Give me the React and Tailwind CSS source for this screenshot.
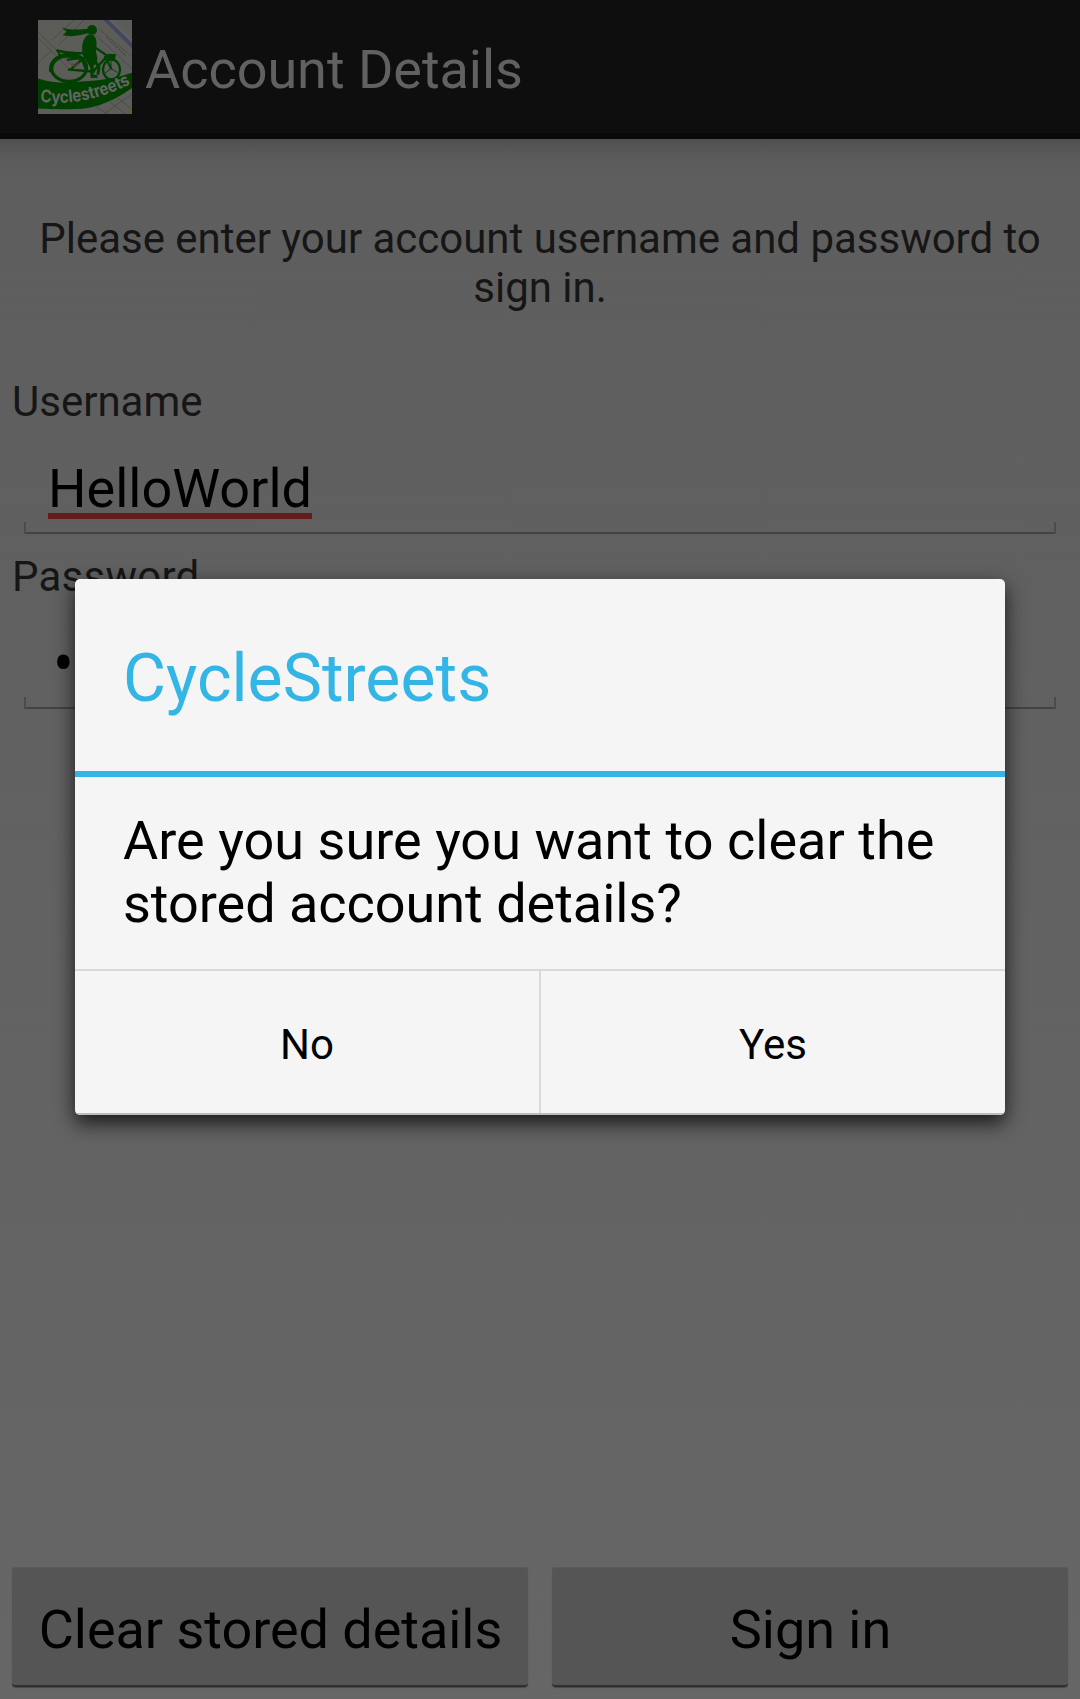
function Logo() {
  return (
    <svg className="block h-[94px] w-[94px] shrink-0" viewBox="0 0 94 95" preserveAspectRatio="none" fill="none">
      <defs>
        <path id="banner" d="M2 82.500 C30 86.500 62 81 98 62" />
        <clipPath id="frame"><rect width="94" height="95" /></clipPath>
      </defs>
      <g clipPath="url(#frame)">
        <rect width="95" height="95" fill="#5c5d58" />
        <g stroke="#4c4d48" strokeWidth="1">
          <path d="M0 12 L36 48 M0 18 L30 48 M14 20 L36 0 M20 26 L46 0 M0 44 L14 30 M54 12 L95 50 M60 8 L95 38 M66 95 L95 74 M58 88 L70 95 M72 83 L88 95 M80 79 L95 91" />
        </g>
        <path d="M68 17 L88 36" stroke="#454642" strokeWidth="1.400" strokeDasharray="2 1.5" />
        <path d="M64 -4 L97 29" stroke="#44475a" strokeWidth="4" />
        <path d="M69 -3 L97 24" stroke="#5f6274" strokeWidth="1.500" />
        <circle cx="93" cy="92" r="2" fill="#7b5a16" />
        <path d="M0 59 C18 65 33 63 48 62 C65 61 81 58 95 53 L95 68 C78 80 60 90 36 90 C24 90.500 12 90 0 89.500 Z" fill="#004000" />
        <g fill="#004000">
          <circle cx="54" cy="10" r="5" />
          <path d="M52 9 C42 9 34 11 24 7.500 L28.500 12 L24.500 15.500 C35 17.500 42 15.500 52 13 Z" />
          <path d="M50 15 C56 13 59 18 58.500 25 L58 33 C60 38 60 42 56 46 C50 42 46 38 44.500 33 C43.500 25 45 19 50 15 Z" />
          <path d="M70 34 L78 34.500 L77 40 L72 41 L68 38 Z" />
        </g>
        <g stroke="#004000" strokeLinecap="round" strokeLinejoin="round">
          <ellipse cx="31" cy="48.500" rx="17.500" ry="13.500" strokeWidth="3.200" />
          <path d="M13 51 C13 40 22 35 34 35.500 C42 36 47 41 48 48" strokeWidth="4.200" />
          <ellipse cx="73.500" cy="50" rx="8.500" ry="10" strokeWidth="2.300" />
          <path d="M73 42 L73 49 L79 53 M73 49 L67 54" strokeWidth="1" />
          <path d="M19.500 31 C32 34 40 34 48 33" strokeWidth="2.600" />
          <path d="M19.500 31 L22 36 L38 38" strokeWidth="2" />
          <path d="M31 50 L55 52 L67 39 M46 35 L56 52 M34 49 L46 38 L30 40" strokeWidth="2.400" />
          <path d="M56 27 L69 36 M67 37 L73 49" strokeWidth="2.200" />
          <path d="M48 33 L54 43 L54 57 L58 57" strokeWidth="3.200" />
          <path d="M54 36 L61 48 L60 54" strokeWidth="3" />
        </g>
        <path d="M34 44 L37 47 L41 43" stroke="#633d30" strokeWidth="1.200" />
        <text fill="#646560" fontFamily="Inter, sans-serif" fontWeight="700" fontSize="17.500">
          <textPath href="#banner" textLength="94" lengthAdjust="spacingAndGlyphs">Cyclestreets</textPath>
        </text>
      </g>
    </svg>
  );
}

function Field({ label, children }) {
  return (
    <div>
      <div className="h-[49px] px-3 text-[42px] leading-[49px] text-[#161616]">{label}</div>
      <div className="flex h-[126px] flex-col px-6">
        <div className="mt-[31px] h-[65px] px-6 text-[54px] leading-[63px] text-black">{children}</div>
        <div className="h-3 border-x-2 border-[#4c4c4c]">
          <div className="mt-[10px] h-[2px] bg-[#434343]" />
        </div>
      </div>
    </div>
  );
}

function FooterButton({ children }) {
  return (
    <button className="h-[120px] flex-1 rounded-[4px] border-b-2 border-[#303030] bg-[#555555] pt-[6px] pl-px text-[54px] leading-[63px] tracking-[-0.04px] text-black shadow-[0_1px_1px_#484848,inset_0_1px_0_#5b5b5b]">
      {children}
    </button>
  );
}

export default function App() {
  return (
    <div className="relative flex h-[1699px] w-[1080px] flex-col overflow-hidden bg-linear-to-b from-[#5d5d5d] to-[#666666] font-[Roboto,sans-serif]">
      <header className="flex h-[139px] shrink-0 items-start border-b-[6px] border-[#090909] bg-[#0e0e0e] pl-[38px]">
        <div className="pt-[20px]"><Logo /></div>
        <h1 className="ml-[13px] mt-[38px] text-[54px] leading-[63px] tracking-[-0.04px] text-[#616161]">Account Details</h1>
      </header>
      <div className="h-[38px] shrink-0 bg-linear-to-b from-black/15 via-black/3 to-transparent" />
      <main className="flex flex-1 flex-col">
        <p className="mx-6 mt-[37px] mb-[65px] text-center text-[42px] leading-[49px] tracking-[-0.02px] text-[#161616]">
          Please enter your account username and password to sign in.
        </p>
        <Field label="Username">
          <span className="inline-block h-[62px] border-b-[6px] border-[#661b1b]">HelloWorld</span>
        </Field>
        <Field label={<span className="tracking-[0.25px]">Password</span>}>
          <span className="ml-[5px] inline-block origin-[50%_32px] scale-y-110 text-[62px]">•</span>
        </Field>
      </main>
      <footer className="flex gap-6 px-3 pb-3">
        <FooterButton>Clear stored details</FooterButton>
        <FooterButton>Sign in</FooterButton>
      </footer>

      <div role="dialog" className="absolute left-[75px] top-[579px] flex h-[536px] w-[930px] flex-col overflow-hidden rounded-[5px] bg-[#f5f5f5] shadow-[0_8px_20px_rgba(0,0,0,0.75)]">
        <h2 className="h-[192px] px-12 pt-[61px] text-[66px] leading-[77px] tracking-[0.06px] text-[#33b5e5]">CycleStreets</h2>
        <div className="h-[6px] bg-[#33b5e5]" />
        <p className="h-[192px] px-12 pt-[32px] text-[54px] leading-[63px] text-black">
          <span className="tracking-[0.04px]">Are you sure you want to clear the</span>{" "}
          <span className="tracking-[-0.02px]">stored account details?</span>
        </p>
        <div className="flex flex-1 border-y-2 border-t-[#d9d9d9] border-b-[#bcbcbc] text-[42px] leading-[49px] text-black">
          <button className="w-[466px] border-r-2 border-[#d9d9d9] pt-[5px]">No</button>
          <button className="flex-1 pt-[5px]">Yes</button>
        </div>
      </div>
    </div>
  );
}
